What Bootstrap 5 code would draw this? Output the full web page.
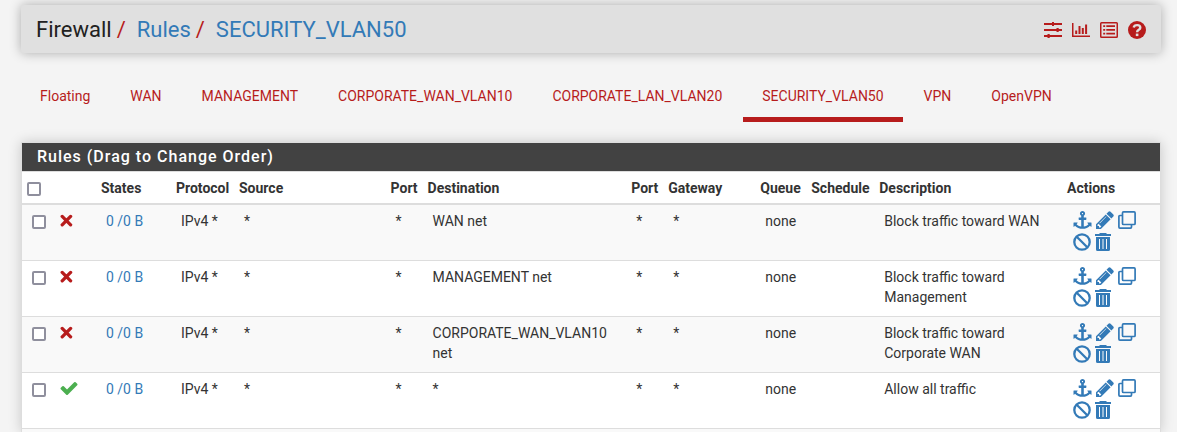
<!DOCTYPE html>
<html lang="en">
<head>
<meta charset="utf-8">
<meta name="viewport" content="width=device-width, initial-scale=1">
<title>Firewall: Rules: SECURITY_VLAN50</title>
<link rel="stylesheet" href="https://cdn.jsdelivr.net/npm/bootstrap@5.3.0/dist/css/bootstrap.min.css">
<style>
body { font-family: Roboto, sans-serif; font-size: 14px; line-height: 20px; color: #333; background: #f4f4f4; }
a { color: #337ab7; text-decoration: none; }
svg { fill: currentColor; display: block; }
.page-wrap { padding: 5px 16px 0 21px; }
.title-bar { background: #e0e0e0; height: 48px; padding: 2px 15px 0; border-radius: 3px; box-shadow: 0 0 12px rgba(0,0,0,.3); }
.crumbs { font-size: 22px; line-height: 30px; }
.crumbs .breadcrumb-item { color: #212121; padding-left: 0; }
.crumbs .breadcrumb-item + .breadcrumb-item::before { color: #b71c1c; padding: 0 11px 0 5px; }
.tool-group { gap: 10px; }
.tool-link { color: #b71c1c; }
.tab-bar { padding-top: 22px; margin-bottom: 20px; gap: 2px; }
.tab-bar .nav-link { color: #b71c1c; padding: 11px 19px; border-bottom: 5px solid transparent; }
.tab-bar .nav-link.active { border-bottom-color: #b71c1c; }
.rules-panel { border: 1px solid #ddd; border-bottom: 0; background: #f9f9f9; padding-bottom: 3px; box-shadow: 0 0 12px rgba(0,0,0,.18); }
.rules-title { background: #424242; color: #fff; font-size: 16px; font-weight: 500; line-height: 18px; letter-spacing: 1px; padding: 5px 15px; }
.rules-table { table-layout: fixed; width: 100%; }
.rules-table tr { background: #fff; }
.rules-table th { padding: 6px 0 5px 5px; line-height: 20px; font-weight: 700; border-top: 1px solid #ddd; border-bottom: 2px solid #ddd; }
.rules-table td { padding: 6px 5px 4px 10px; vertical-align: top; border-bottom: 1px solid #ddd; }
.rules-table tbody tr:nth-child(odd) { background: #f9f9f9; }
.col-check { width: 32px; } .col-state { width: 42px; } .col-states { width: 75px; } .col-proto { width: 63px; }
.col-port { width: 37px; } .col-dest { width: 17.9%; } .col-gate { width: 92px; } .col-queue { width: 51px; }
.col-sched { width: 68px; } .col-desc { width: 16.5%; } .col-act { width: 98px; }
.tick { appearance: none; display: block; width: 14px; height: 14px; margin: 4px 0 0; border: 2px solid #8f8f9d; border-radius: 2px; background: #fff; }
.tick:checked { background: #337ab7; border-color: #337ab7; }
th .tick { margin-top: 1px; }
.rules-table td.state-cell { padding: 9px 0 0 6px; }
.rules-table td.act-cell { padding: 6px 10px 9px 11px; }
.text-block { color: #b71c1c; }
.text-pass { color: #4caf50; }
</style>
</head>
<body>
<svg class="d-none" aria-hidden="true">
  <symbol id="i-x" viewBox="0 0 13 13"><path fill="none" stroke="currentColor" stroke-width="3.300" stroke-linecap="round" d="M2.200 2.400l8.400 8.400M10.600 2.400l-8.400 8.400"/></symbol>
  <symbol id="i-check" viewBox="121 334 1550 1188"><path d="M1671 566q0 40-28 68l-724 724-136 136q-28 28-68 28t-68-28l-136-136-362-362q-28-28-28-68t28-68l136-136q28-28 68-28t68 28l294 295 656-657q28-28 68-28t68 28l136 136q28 28 28 68z"/></symbol>
  <symbol id="i-anchor" viewBox="0 0 1792 1792"><path d="M960 256q0-26-19-45t-45-19-45 19-19 45 19 45 45 19 45-19 19-45zm832 928v352q0 22-20 30-8 2-12 2-12 0-23-9l-93-93q-119 143-318.5 226.5t-429.5 83.5-429.5-83.5-318.500-226.500l-93 93q-9 9-23 9-4 0-12-2-20-8-20-30v-352q0-14 9-23t23-9h352q22 0 30 20 8 19-7 35l-100 100q67 91 189.500 153.500t271.500 82.500v-647h-192q-26 0-45-19t-19-45v-128q0-26 19-45t45-19h192v-163q-58-34-93-92.500t-35-128.500q0-106 75-181t181-75 181 75 75 181q0 70-35 128.500t-93 92.500v163h192q26 0 45 19t19 45v128q0 26-19 45t-45 19h-192v647q149-20 271.500-82.500t189.500-153.500l-100-100q-15-16-7-35 8-20 30-20h352q14 0 23 9t9 23z"/></symbol>
  <symbol id="i-pencil" viewBox="128 128 1536 1536"><path d="M491 1536l91-91-235-235-91 91v107h128v128h107zm523-928q0-22-22-22-10 0-17 7l-542 542q-7 7-7 17 0 22 22 22 10 0 17-7l542-542q7-7 7-17zm-54-192l416 416-832 832h-416v-416zm683 96q0 53-37 90l-166 166-416-416 166-165q36-38 90-38 53 0 91 38l235 234q37 39 37 91z"/></symbol>
  <symbol id="i-clone" viewBox="0 0 18 18"><path fill="none" stroke="currentColor" stroke-width="1.700" d="M5.500.9h10.600a1 1 0 0 1 1 1v10.600a1 1 0 0 1-1 1h-10.600a1 1 0 0 1-1-1v-10.600a1 1 0 0 1 1-1zM4.500 4.500h-2.600a1 1 0 0 0-1 1v10.600a1 1 0 0 0 1 1h10.600a1 1 0 0 0 1-1v-2.600"/></symbol>
  <symbol id="i-ban" viewBox="0 0 18 18"><g fill="none" stroke="currentColor" stroke-width="2.300"><circle cx="9" cy="9" r="7.700"/><path d="M3.700 3.700l10.600 10.600"/></g></symbol>
  <symbol id="i-trash" viewBox="0 0 16 18"><path fill-rule="evenodd" d="M5 0h6l1 1h4v2h-16v-2h4zM1 4h14v12.500a1.500 1.500 0 0 1-1.500 1.500h-11a1.500 1.500 0 0 1-1.500-1.500zM4 6v10h1v-10zM7.500 6v10h1v-10zM11 6v10h1v-10z"/></symbol>
  <symbol id="i-sliders" viewBox="0 0 18 18"><path d="M0 2h18v2h-18zM0 8h18v2h-18zM0 14h18v2h-18zM8 1h2v4h-2zM12.500 7h2.200v4h-2.200zM3.500 13h2.200v4h-2.200z"/></symbol>
  <symbol id="i-chart" viewBox="0 0 18 18"><path d="M0 2h1.500v12.500h16.500v1.500h-18zM3.200 9.500h2v3.500h-2zM6.500 5h2v8h-2zM9.800 7h2v6h-2zM13.100 3.500h2v9.500h-2z"/></symbol>
  <symbol id="i-list" viewBox="0 0 18 18"><path fill-rule="evenodd" d="M1.500 1h15a1.500 1.500 0 0 1 1.500 1.500v13a1.500 1.500 0 0 1-1.500 1.500h-15a1.500 1.500 0 0 1-1.500-1.500v-13a1.500 1.500 0 0 1 1.500-1.500zM1.500 2.500v13h15v-13zM3.200 4.200h2v1.800h-2zM6.300 4.200h8.700v1.800h-8.700zM3.200 8h2v1.800h-2zM6.300 8h8.700v1.800h-8.700zM3.200 11.800h2v1.800h-2zM6.300 11.800h8.700v1.800h-8.700z"/></symbol>
  <symbol id="i-help" viewBox="0 0 18 18"><circle cx="9" cy="9" r="9"/><path fill="none" stroke="#e0e0e0" stroke-width="2.400" d="M5.700 6.500c.6-3.200 6.600-3.300 6.600.2 0 2.300-3.200 2-3.200 4.500"/><path fill="#e0e0e0" d="M7.800 12.600h2.600v2.500h-2.600z"/></symbol>
</svg>
<div class="page-wrap">
  <header class="title-bar d-flex align-items-center justify-content-between">
    <nav aria-label="breadcrumb">
      <ol class="breadcrumb crumbs mb-0">
        <li class="breadcrumb-item">Firewall</li>
        <li class="breadcrumb-item"><a href="#">Rules</a></li>
        <li class="breadcrumb-item"><a href="#">SECURITY_VLAN50</a></li>
      </ol>
    </nav>
    <div class="d-flex tool-group">
      <a class="tool-link" href="#" aria-label="Filter settings"><svg width="18" height="18"><use href="#i-sliders"/></svg></a>
      <a class="tool-link" href="#" aria-label="Monitoring"><svg width="18" height="18"><use href="#i-chart"/></svg></a>
      <a class="tool-link" href="#" aria-label="Logs"><svg width="18" height="18"><use href="#i-list"/></svg></a>
      <a class="tool-link" href="#" aria-label="Help"><svg width="18" height="18"><use href="#i-help"/></svg></a>
    </div>
  </header>
  <ul class="nav tab-bar">
    <li class="nav-item"><a class="nav-link" href="#">Floating</a></li>
    <li class="nav-item"><a class="nav-link" href="#">WAN</a></li>
    <li class="nav-item"><a class="nav-link" href="#">MANAGEMENT</a></li>
    <li class="nav-item"><a class="nav-link" href="#">CORPORATE_WAN_VLAN10</a></li>
    <li class="nav-item"><a class="nav-link" href="#">CORPORATE_LAN_VLAN20</a></li>
    <li class="nav-item"><a class="nav-link active" aria-current="page" href="#">SECURITY_VLAN50</a></li>
    <li class="nav-item"><a class="nav-link" href="#">VPN</a></li>
    <li class="nav-item"><a class="nav-link" href="#">OpenVPN</a></li>
  </ul>
  <section class="rules-panel">
    <h2 class="rules-title mb-0">Rules (Drag to Change Order)</h2>
    <table class="rules-table">
      <colgroup><col class="col-check"><col class="col-state"><col class="col-states"><col class="col-proto"><col><col class="col-port"><col class="col-dest"><col class="col-port"><col class="col-gate"><col class="col-queue"><col class="col-sched"><col class="col-desc"><col class="col-act"></colgroup>
      <thead>
        <tr><th><input class="tick" type="checkbox" aria-label="Select all"></th><th></th><th>States</th><th>Protocol</th><th>Source</th><th>Port</th><th>Destination</th><th>Port</th><th>Gateway</th><th>Queue</th><th>Schedule</th><th>Description</th><th>Actions</th></tr>
      </thead>
      <tbody id="rules"></tbody>
    </table>
  </section>
</div>
<script src="https://cdn.jsdelivr.net/npm/bootstrap@5.3.0/dist/js/bootstrap.bundle.min.js"></script>
<script>
const rules = [
  ["block", "WAN net", "Block traffic toward WAN"],
  ["block", "MANAGEMENT net", "Block traffic toward Management"],
  ["block", "CORPORATE_WAN_VLAN10 net", "Block traffic toward Corporate WAN"],
  ["pass", "*", "Allow all traffic"]
];
const action = (icon, label, w, h) => `<a href="#" aria-label="${label}"><svg width="${w}" height="${h}"><use href="#i-${icon}"/></svg></a>`;
document.getElementById("rules").innerHTML = rules.map(([kind, dest, desc]) => `<tr>
  <td><input class="tick" type="checkbox" aria-label="Select rule: ${desc}"></td>
  <td class="state-cell">${kind === "block"
    ? '<svg class="text-block" width="13" height="13" role="img" aria-label="Block"><use href="#i-x"/></svg>'
    : '<svg class="text-pass" width="18" height="13" role="img" aria-label="Pass"><use href="#i-check"/></svg>'}</td>
  <td><a href="#">0 /0 B</a></td><td>IPv4 *</td><td>*</td><td>*</td><td>${dest}</td><td>*</td><td>*</td><td>none</td><td></td><td>${desc}</td>
  <td class="act-cell"><div class="d-flex flex-wrap gap-1">${action("anchor", "Add separator", 19, 18)}${action("pencil", "Edit", 18, 18)}${action("clone", "Copy", 18, 18)}${action("ban", "Disable", 18, 18)}${action("trash", "Delete", 16, 18)}</div></td>
</tr>`).join("");
</script>
</body>
</html>
